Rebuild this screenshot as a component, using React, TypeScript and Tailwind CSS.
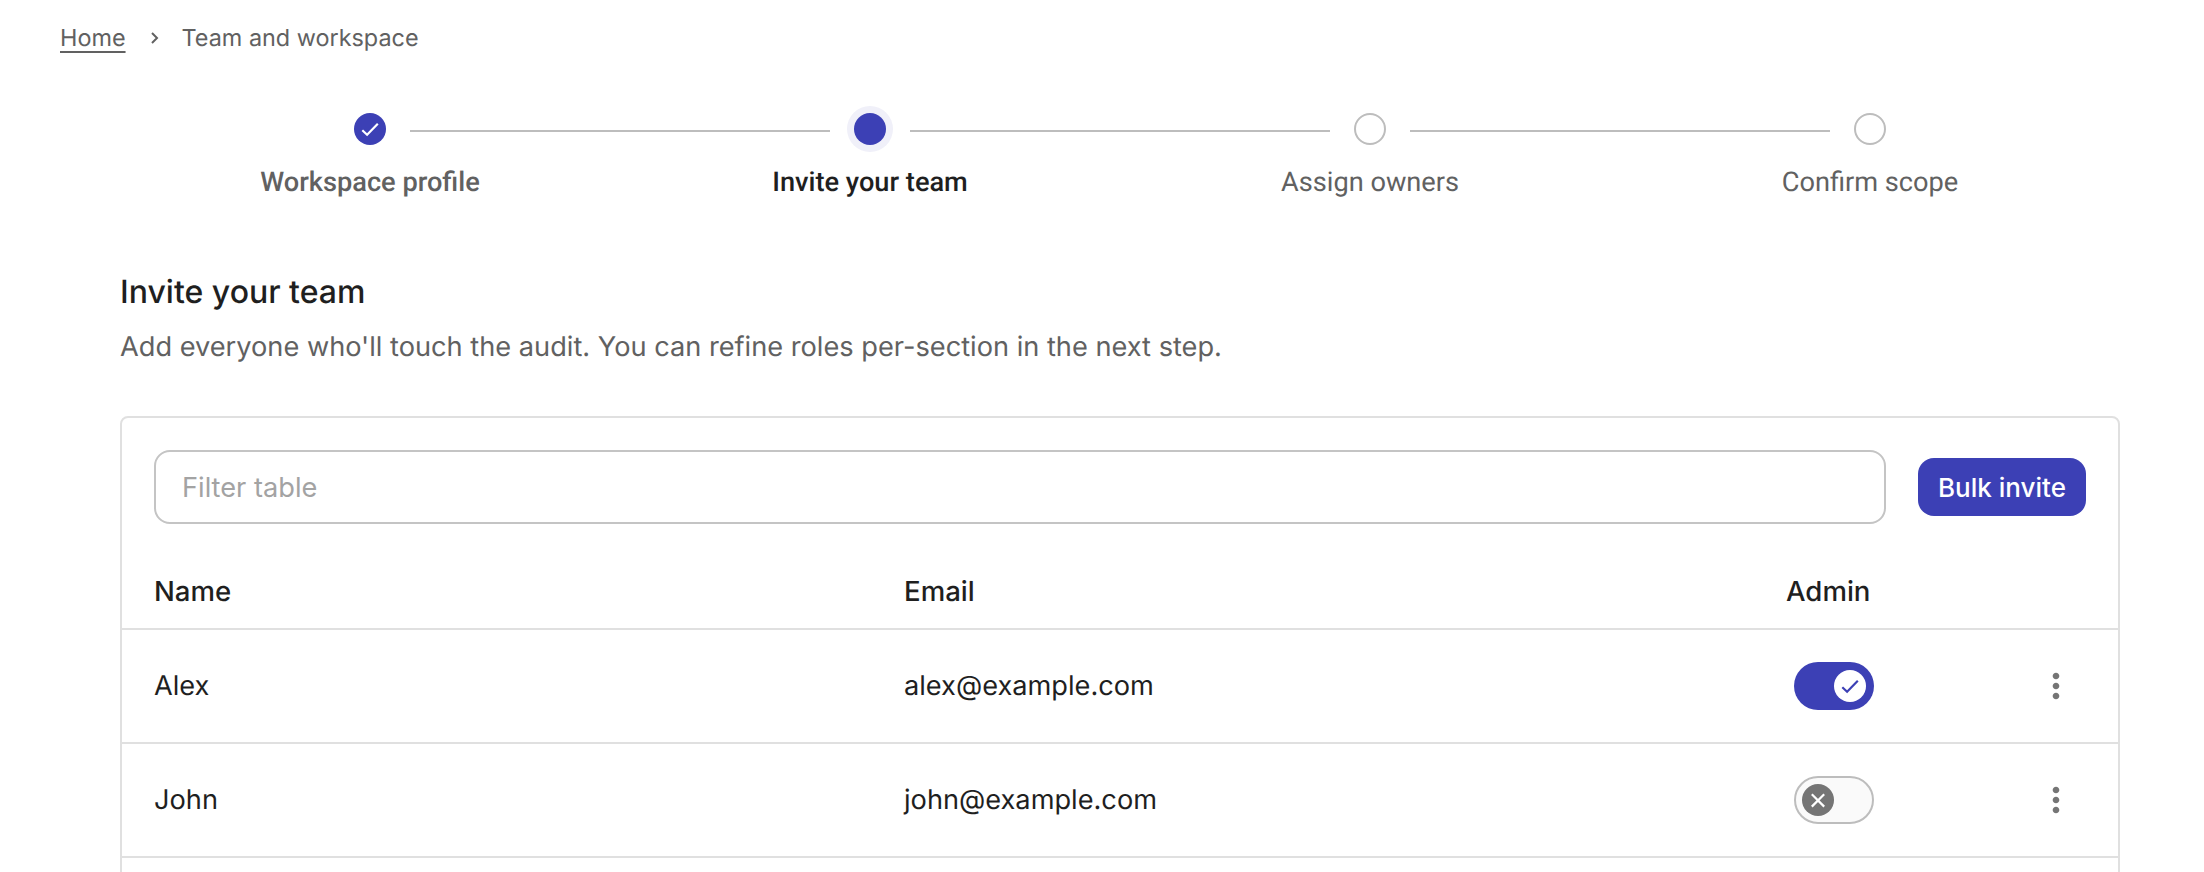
const steps = [
  { label: "Workspace profile", state: "done" },
  { label: "Invite your team", state: "active" },
  { label: "Assign owners", state: "todo" },
  { label: "Confirm scope", state: "todo" },
];

const members = [
  { name: "Alex", email: "alex@example.com", admin: true },
  { name: "John", email: "john@example.com", admin: false },
];

function CheckIcon() {
  return (
    <svg viewBox="0 0 32 32" className="size-8 fill-none stroke-current stroke-[2.2]">
      <path d="M8.3 17.2l4.8 4.5L23.8 10.8" />
    </svg>
  );
}

function StepDot({ state }: { state: string }) {
  if (state === "done") {
    return (
      <span className="size-8 shrink-0 rounded-full bg-[#3c40b5] text-white">
        <CheckIcon />
      </span>
    );
  }
  if (state === "active") {
    return <span className="size-8 shrink-0 rounded-full bg-[#3c40b5] ring-[7px] ring-[#f0f0f9]" />;
  }
  return <span className="size-8 shrink-0 rounded-full border-2 border-[#bdbdbd]" />;
}

function Toggle({ on }: { on: boolean }) {
  if (on) {
    return (
      <span className="ml-2 flex h-12 w-20 items-center justify-end rounded-full bg-[#3c40b5] pr-2">
        <span className="size-8 rounded-full bg-white text-[#3c40b5]">
          <CheckIcon />
        </span>
      </span>
    );
  }
  return (
    <span className="ml-2 flex h-12 w-20 items-center rounded-full border-2 border-[#bdbdbd] bg-[#fafafa] pl-1.5">
      <span className="size-8 rounded-full bg-[#757575]">
        <svg viewBox="0 0 32 32" className="size-8 fill-none stroke-white stroke-[2.2]">
          <path d="M9.8 10.2l12.4 12.4M22.2 10.2L9.8 22.6" />
        </svg>
      </span>
    </span>
  );
}

function MoreIcon() {
  return (
    <svg viewBox="0 0 24 24" className="size-10 fill-[#757575]">
      <path d="M12 8c1.1 0 2-.9 2-2s-.9-2-2-2-2 .9-2 2 .9 2 2 2zm0 2c-1.1 0-2 .9-2 2s.9 2 2 2 2-.9 2-2-.9-2-2-2zm0 6c-1.1 0-2 .9-2 2s.9 2 2 2 2-.9 2-2-.9-2-2-2z" />
    </svg>
  );
}

export default function App() {
  return (
    <div className="h-[872px] overflow-hidden bg-white font-['Inter',sans-serif] text-[#1f1f1f] [text-rendering:geometricPrecision]">
      <nav className="flex h-[76px] items-center pl-[60px] text-[23.4px] text-[#616161]">
        <a className="underline decoration-2 underline-offset-[5px]">Home</a>
        <svg viewBox="0 0 24 24" className="mx-[16px] size-6 fill-none stroke-[#616161] stroke-2">
          <path d="M10 7l5 5-5 5" />
        </svg>
        <span>Team and workspace</span>
      </nav>

      <section className="mt-[37px] ml-[120px] w-[2000px]">
        <div className="flex items-start pl-[234px]">
          {steps.map((step, i) => (
            <div key={step.label} className="flex items-start">
              <StepDot state={step.state} />
              {i < steps.length - 1 && <span className="mx-6 mt-[17px] h-0.5 w-[420px] bg-[#bdbdbd]" />}
            </div>
          ))}
        </div>
        <div className="mt-[19px] grid grid-cols-4 font-['Roboto',sans-serif] text-[27.2px] leading-9 text-[#616161]">
          {steps.map((step) => (
            <div
              key={step.label}
              className={
                step.state === "todo"
                  ? "text-center"
                  : step.state === "active"
                    ? "text-center font-medium text-[#1f1f1f]"
                    : "text-center font-medium"
              }
            >
              {step.label}
            </div>
          ))}
        </div>
      </section>

      <section className="mt-[72px] ml-[120px] w-[2000px]">
        <h1 className="text-[32px] leading-10 font-medium">Invite your team</h1>
        <p className="mt-[15px] text-[27.2px] leading-10 text-[#616161]">
          Add everyone who'll touch the audit. You can refine roles per-section in the next step.
        </p>

        <div className="mt-[49px] h-[500px] rounded-t-lg border-2 border-[#e0e0e0]">
          <div className="flex items-center gap-8 px-8 pt-8">
            <input
              placeholder="Filter table"
              className="h-[74px] flex-1 rounded-2xl border-2 border-[#c4c4c4] px-[26px] text-[27.2px] outline-none placeholder:text-[#a3a3a3]"
            />
            <button className="h-[58px] w-[168px] rounded-2xl bg-[#3c40b5] text-[26px] font-medium text-white">
              Bulk invite
            </button>
          </div>

          <div className="mt-[26px] grid h-[80px] grid-cols-[750px_882px_1fr] items-center border-b-2 border-[#e0e0e0] pt-[6px] pl-8 text-[27.6px] font-medium">
            <span>Name</span>
            <span>Email</span>
            <span>Admin</span>
          </div>

          {members.map((m) => (
            <div
              key={m.email}
              className="grid h-[114px] grid-cols-[750px_882px_1fr_auto] items-center border-b-2 border-[#e0e0e0] pl-8 text-[27.2px]"
            >
              <span className="pt-px">{m.name}</span>
              <span className="pt-px">{m.email}</span>
              <Toggle on={m.admin} />
              <span className="mr-[42px]">
                <MoreIcon />
              </span>
            </div>
          ))}
        </div>
      </section>
    </div>
  );
}
